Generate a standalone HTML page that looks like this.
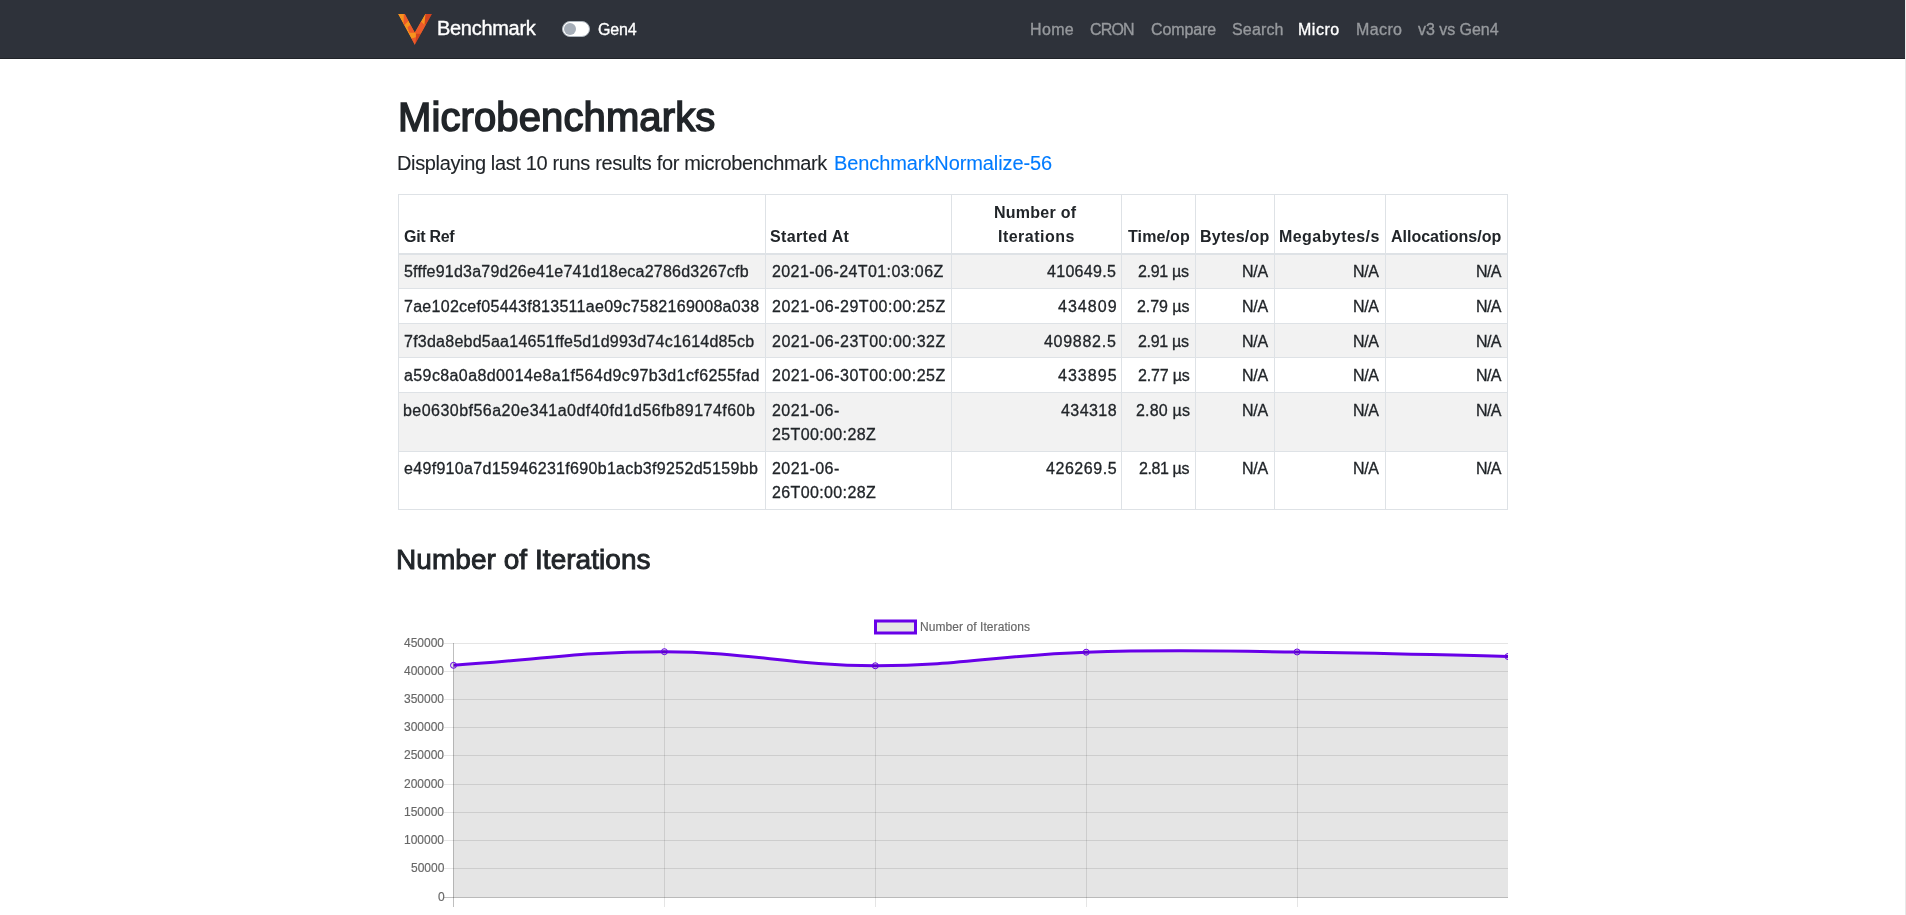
<!DOCTYPE html>
<html><head><meta charset="utf-8"><title>Microbenchmarks</title>
<style>
html,body{margin:0;padding:0;background:#fff;}
body{width:1906px;height:915px;overflow:hidden;position:relative;font-family:"Liberation Sans",sans-serif;}
.abs{position:absolute;}
.t{position:absolute;white-space:nowrap;will-change:transform;}
</style></head><body>
<div class="abs" style="left:0;top:0;width:1905px;height:58px;background:#2e323a"></div>
<div class="abs" style="left:0;top:58px;width:1905px;height:1px;background:#202328"></div>
<div class="abs" style="left:1905px;top:0;width:1px;height:915px;background:#e8e8e8"></div>
<svg class="abs" style="left:0;top:0" width="440" height="50"><defs><mask id="vm" maskUnits="userSpaceOnUse" x="0" y="0" width="440" height="50"><polygon points="397.91,14.10 404.99,14.10 414.75,32.28 425.09,14.10 431.97,14.10 414.75,44.91" fill="#fff"/></mask></defs><g mask="url(#vm)"><polygon points="397.91,14.10 404.99,14.10 414.75,32.28 425.09,14.10 431.97,14.10 414.75,44.91" fill="#f7931e"/><polygon points="403.85,13.53 405.18,13.53 408.63,20.80 403.96,25.39 403.46,24.63" fill="#ec5a2a"/><polygon points="410.62,24.63 415.14,32.28 413.99,32.86 409.39,32.86 407.48,27.31" fill="#ec5a2a"/><polygon points="411.31,38.41 416.67,36.88 417.43,38.79 414.75,45.68" fill="#ec5a2a"/><polygon points="425.47,13.53 432.74,13.53 426.23,24.63 424.51,24.63" fill="#d2431f"/><polygon points="420.88,21.57 424.51,24.63 426.23,24.63 421.26,33.43 415.90,33.43 414.75,32.28" fill="#ec5a2a"/><polygon points="415.90,33.43 421.26,33.43 415.14,45.68 415.90,38.79" fill="#d2431f"/></g></svg>
<div class="abs" style="left:562px;top:21px;width:26px;height:14px;border:1px solid #adb5bd;border-radius:8px;background:#fff"></div>
<div class="abs" style="left:564px;top:23px;width:12px;height:12px;border-radius:50%;background:#a6aeb8"></div>
<div class="abs" style="left:398px;top:255px;width:1110px;height:33px;background:#f2f2f2"></div>
<div class="abs" style="left:398px;top:324px;width:1110px;height:33px;background:#f2f2f2"></div>
<div class="abs" style="left:398px;top:393px;width:1110px;height:58px;background:#f2f2f2"></div>
<div class="abs" style="left:398px;top:194px;width:1110px;height:1px;background:#dee2e6"></div>
<div class="abs" style="left:398px;top:288px;width:1110px;height:1px;background:#dee2e6"></div>
<div class="abs" style="left:398px;top:323px;width:1110px;height:1px;background:#dee2e6"></div>
<div class="abs" style="left:398px;top:357px;width:1110px;height:1px;background:#dee2e6"></div>
<div class="abs" style="left:398px;top:392px;width:1110px;height:1px;background:#dee2e6"></div>
<div class="abs" style="left:398px;top:451px;width:1110px;height:1px;background:#dee2e6"></div>
<div class="abs" style="left:398px;top:509px;width:1110px;height:1px;background:#dee2e6"></div>
<div class="abs" style="left:398px;top:253px;width:1110px;height:2px;background:#dee2e6"></div>
<div class="abs" style="left:398px;top:194px;width:1px;height:316px;background:#dee2e6"></div>
<div class="abs" style="left:765px;top:194px;width:1px;height:316px;background:#dee2e6"></div>
<div class="abs" style="left:951px;top:194px;width:1px;height:316px;background:#dee2e6"></div>
<div class="abs" style="left:1121px;top:194px;width:1px;height:316px;background:#dee2e6"></div>
<div class="abs" style="left:1195px;top:194px;width:1px;height:316px;background:#dee2e6"></div>
<div class="abs" style="left:1274px;top:194px;width:1px;height:316px;background:#dee2e6"></div>
<div class="abs" style="left:1385px;top:194px;width:1px;height:316px;background:#dee2e6"></div>
<div class="abs" style="left:1507px;top:194px;width:1px;height:316px;background:#dee2e6"></div>
<svg class="abs" width="1906" height="915" style="left:0;top:0">
<defs><clipPath id="cc"><rect x="398" y="590" width="1110" height="330"/></clipPath></defs>
<g clip-path="url(#cc)">
<path d="M453.50,665.32 C537.86,659.86 580.05,651.59 664.40,651.68 C748.77,651.76 790.93,665.65 875.30,665.75 C959.65,665.86 1001.75,654.96 1086.20,652.19 C1170.47,649.44 1212.75,651.09 1297.10,651.96 C1381.47,652.82 1423.64,654.68 1508.00,656.50 L1508.00,897.20 L453.50,897.20 Z" fill="rgba(0,0,0,0.1)"/>
<line x1="444" y1="643.5" x2="1508" y2="643.5" stroke="rgba(0,0,0,0.1)" stroke-width="1"/>
<line x1="444" y1="671.5" x2="1508" y2="671.5" stroke="rgba(0,0,0,0.1)" stroke-width="1"/>
<line x1="444" y1="699.5" x2="1508" y2="699.5" stroke="rgba(0,0,0,0.1)" stroke-width="1"/>
<line x1="444" y1="727.5" x2="1508" y2="727.5" stroke="rgba(0,0,0,0.1)" stroke-width="1"/>
<line x1="444" y1="755.5" x2="1508" y2="755.5" stroke="rgba(0,0,0,0.1)" stroke-width="1"/>
<line x1="444" y1="784.5" x2="1508" y2="784.5" stroke="rgba(0,0,0,0.1)" stroke-width="1"/>
<line x1="444" y1="812.5" x2="1508" y2="812.5" stroke="rgba(0,0,0,0.1)" stroke-width="1"/>
<line x1="444" y1="840.5" x2="1508" y2="840.5" stroke="rgba(0,0,0,0.1)" stroke-width="1"/>
<line x1="444" y1="868.5" x2="1508" y2="868.5" stroke="rgba(0,0,0,0.1)" stroke-width="1"/>
<line x1="444" y1="897.5" x2="1508" y2="897.5" stroke="rgba(0,0,0,0.25)" stroke-width="1"/>
<line x1="453.5" y1="643" x2="453.5" y2="907" stroke="rgba(0,0,0,0.25)" stroke-width="1"/>
<line x1="664.5" y1="643" x2="664.5" y2="907" stroke="rgba(0,0,0,0.1)" stroke-width="1"/>
<line x1="875.5" y1="643" x2="875.5" y2="907" stroke="rgba(0,0,0,0.1)" stroke-width="1"/>
<line x1="1086.5" y1="643" x2="1086.5" y2="907" stroke="rgba(0,0,0,0.1)" stroke-width="1"/>
<line x1="1297.5" y1="643" x2="1297.5" y2="907" stroke="rgba(0,0,0,0.1)" stroke-width="1"/>
<line x1="1508.5" y1="643" x2="1508.5" y2="907" stroke="rgba(0,0,0,0.1)" stroke-width="1"/>
<path d="M453.50,665.32 C537.86,659.86 580.05,651.59 664.40,651.68 C748.77,651.76 790.93,665.65 875.30,665.75 C959.65,665.86 1001.75,654.96 1086.20,652.19 C1170.47,649.44 1212.75,651.09 1297.10,651.96 C1381.47,652.82 1423.64,654.68 1508.00,656.50" fill="none" stroke="#6800e8" stroke-width="3" stroke-linejoin="round"/>
<circle cx="453.50" cy="665.32" r="3" fill="rgba(0,0,0,0.1)" stroke="#6800e8" stroke-width="1"/>
<circle cx="664.40" cy="651.68" r="3" fill="rgba(0,0,0,0.1)" stroke="#6800e8" stroke-width="1"/>
<circle cx="875.30" cy="665.75" r="3" fill="rgba(0,0,0,0.1)" stroke="#6800e8" stroke-width="1"/>
<circle cx="1086.20" cy="652.19" r="3" fill="rgba(0,0,0,0.1)" stroke="#6800e8" stroke-width="1"/>
<circle cx="1297.10" cy="651.96" r="3" fill="rgba(0,0,0,0.1)" stroke="#6800e8" stroke-width="1"/>
<circle cx="1508.00" cy="656.50" r="3" fill="rgba(0,0,0,0.1)" stroke="#6800e8" stroke-width="1"/>
</g>
<rect x="875.5" y="621" width="40" height="12" fill="rgba(0,0,0,0.1)" stroke="#6800e8" stroke-width="3"/>
</svg>
<div class="t" style="left:436.70px;top:18.00px;font-size:20px;line-height:20px;font-weight:400;color:#fff;letter-spacing:-0.294px;-webkit-text-stroke:0.40px #fff">Benchmark</div>
<div class="t" style="left:598.46px;top:22.00px;font-size:16px;line-height:16px;font-weight:400;color:#fff;letter-spacing:-0.131px;-webkit-text-stroke:0.35px #fff">Gen4</div>
<div class="t" style="left:1029.67px;top:22.00px;font-size:16px;line-height:16px;font-weight:400;color:#96999d;letter-spacing:0.356px;-webkit-text-stroke:0.35px #96999d">Home</div>
<div class="t" style="left:1090.17px;top:22.00px;font-size:16px;line-height:16px;font-weight:400;color:#96999d;letter-spacing:-0.815px;-webkit-text-stroke:0.35px #96999d">CRON</div>
<div class="t" style="left:1151.17px;top:22.00px;font-size:16px;line-height:16px;font-weight:400;color:#96999d;letter-spacing:-0.093px;-webkit-text-stroke:0.35px #96999d">Compare</div>
<div class="t" style="left:1232.24px;top:22.00px;font-size:16px;line-height:16px;font-weight:400;color:#96999d;letter-spacing:0.155px;-webkit-text-stroke:0.35px #96999d">Search</div>
<div class="t" style="left:1298.44px;top:22.00px;font-size:16px;line-height:16px;font-weight:400;color:#fff;letter-spacing:0.535px;-webkit-text-stroke:0.35px #fff">Micro</div>
<div class="t" style="left:1355.67px;top:22.00px;font-size:16px;line-height:16px;font-weight:400;color:#96999d;letter-spacing:0.384px;-webkit-text-stroke:0.35px #96999d">Macro</div>
<div class="t" style="left:1417.69px;top:22.00px;font-size:16px;line-height:16px;font-weight:400;color:#96999d;letter-spacing:-0.042px;-webkit-text-stroke:0.35px #96999d">v3 vs Gen4</div>
<div class="t" style="left:397.71px;top:97.00px;font-size:40px;line-height:40px;font-weight:400;color:#212529;letter-spacing:0.114px;-webkit-text-stroke:1.50px #212529">Microbenchmarks</div>
<div class="t" style="left:397.33px;top:153.00px;font-size:20px;line-height:20px;font-weight:400;color:#212529;letter-spacing:-0.360px;-webkit-text-stroke:0.10px #212529">Displaying last 10 runs results for microbenchmark</div>
<div class="t" style="left:833.53px;top:153.00px;font-size:20px;line-height:20px;font-weight:400;color:#007bff;letter-spacing:-0.092px;-webkit-text-stroke:0.10px #007bff">BenchmarkNormalize-56</div>
<div class="t" style="left:404.00px;top:229.00px;font-size:16px;line-height:16px;font-weight:700;color:#212529;letter-spacing:-0.316px">Git Ref</div>
<div class="t" style="left:770.26px;top:229.00px;font-size:16px;line-height:16px;font-weight:700;color:#212529;letter-spacing:0.339px">Started At</div>
<div class="t" style="left:994.26px;top:205.00px;font-size:16px;line-height:16px;font-weight:700;color:#212529;letter-spacing:0.259px">Number of</div>
<div class="t" style="left:997.98px;top:229.00px;font-size:16px;line-height:16px;font-weight:700;color:#212529;letter-spacing:0.480px">Iterations</div>
<div class="t" style="left:1127.52px;top:229.00px;font-size:16px;line-height:16px;font-weight:700;color:#212529;letter-spacing:0.118px">Time/op</div>
<div class="t" style="left:1199.52px;top:229.00px;font-size:16px;line-height:16px;font-weight:700;color:#212529;letter-spacing:0.238px">Bytes/op</div>
<div class="t" style="left:1279.48px;top:229.00px;font-size:16px;line-height:16px;font-weight:700;color:#212529;letter-spacing:0.432px">Megabytes/s</div>
<div class="t" style="left:1391.00px;top:229.00px;font-size:16px;line-height:16px;font-weight:700;color:#212529;letter-spacing:0.001px">Allocations/op</div>
<div class="t" style="left:404.15px;top:264.00px;font-size:16px;line-height:16px;font-weight:400;color:#212529;letter-spacing:0.226px;-webkit-text-stroke:0.30px #212529">5fffe91d3a79d26e41e741d18eca2786d3267cfb</div>
<div class="t" style="left:771.63px;top:264.00px;font-size:16px;line-height:16px;font-weight:400;color:#212529;letter-spacing:0.396px;-webkit-text-stroke:0.30px #212529">2021-06-24T01:03:06Z</div>
<div class="t" style="left:1047.39px;top:264.00px;font-size:16px;line-height:16px;font-weight:400;color:#212529;letter-spacing:0.298px;-webkit-text-stroke:0.30px #212529">410649.5</div>
<div class="t" style="left:1138.41px;top:264.00px;font-size:16px;line-height:16px;font-weight:400;color:#212529;letter-spacing:-0.311px;-webkit-text-stroke:0.30px #212529">2.91 µs</div>
<div class="t" style="left:1242.41px;top:264.00px;font-size:16px;line-height:16px;font-weight:400;color:#212529;letter-spacing:-0.290px;-webkit-text-stroke:0.30px #212529">N/A</div>
<div class="t" style="left:1352.91px;top:264.00px;font-size:16px;line-height:16px;font-weight:400;color:#212529;letter-spacing:-0.410px;-webkit-text-stroke:0.30px #212529">N/A</div>
<div class="t" style="left:1475.63px;top:264.00px;font-size:16px;line-height:16px;font-weight:400;color:#212529;letter-spacing:-0.660px;-webkit-text-stroke:0.30px #212529">N/A</div>
<div class="t" style="left:404.15px;top:299.00px;font-size:16px;line-height:16px;font-weight:400;color:#212529;letter-spacing:0.282px;-webkit-text-stroke:0.30px #212529">7ae102cef05443f813511ae09c7582169008a038</div>
<div class="t" style="left:771.63px;top:299.00px;font-size:16px;line-height:16px;font-weight:400;color:#212529;letter-spacing:0.502px;-webkit-text-stroke:0.30px #212529">2021-06-29T00:00:25Z</div>
<div class="t" style="left:1057.63px;top:299.00px;font-size:16px;line-height:16px;font-weight:400;color:#212529;letter-spacing:1.038px;-webkit-text-stroke:0.30px #212529">434809</div>
<div class="t" style="left:1136.91px;top:299.00px;font-size:16px;line-height:16px;font-weight:400;color:#212529;letter-spacing:-0.061px;-webkit-text-stroke:0.30px #212529">2.79 µs</div>
<div class="t" style="left:1242.41px;top:299.00px;font-size:16px;line-height:16px;font-weight:400;color:#212529;letter-spacing:-0.290px;-webkit-text-stroke:0.30px #212529">N/A</div>
<div class="t" style="left:1352.91px;top:299.00px;font-size:16px;line-height:16px;font-weight:400;color:#212529;letter-spacing:-0.410px;-webkit-text-stroke:0.30px #212529">N/A</div>
<div class="t" style="left:1475.63px;top:299.00px;font-size:16px;line-height:16px;font-weight:400;color:#212529;letter-spacing:-0.660px;-webkit-text-stroke:0.30px #212529">N/A</div>
<div class="t" style="left:404.15px;top:334.00px;font-size:16px;line-height:16px;font-weight:400;color:#212529;letter-spacing:0.245px;-webkit-text-stroke:0.30px #212529">7f3da8ebd5aa14651ffe5d1d993d74c1614d85cb</div>
<div class="t" style="left:771.63px;top:334.00px;font-size:16px;line-height:16px;font-weight:400;color:#212529;letter-spacing:0.502px;-webkit-text-stroke:0.30px #212529">2021-06-23T00:00:32Z</div>
<div class="t" style="left:1044.41px;top:334.00px;font-size:16px;line-height:16px;font-weight:400;color:#212529;letter-spacing:0.723px;-webkit-text-stroke:0.30px #212529">409882.5</div>
<div class="t" style="left:1138.41px;top:334.00px;font-size:16px;line-height:16px;font-weight:400;color:#212529;letter-spacing:-0.311px;-webkit-text-stroke:0.30px #212529">2.91 µs</div>
<div class="t" style="left:1242.41px;top:334.00px;font-size:16px;line-height:16px;font-weight:400;color:#212529;letter-spacing:-0.290px;-webkit-text-stroke:0.30px #212529">N/A</div>
<div class="t" style="left:1352.91px;top:334.00px;font-size:16px;line-height:16px;font-weight:400;color:#212529;letter-spacing:-0.410px;-webkit-text-stroke:0.30px #212529">N/A</div>
<div class="t" style="left:1475.63px;top:334.00px;font-size:16px;line-height:16px;font-weight:400;color:#212529;letter-spacing:-0.660px;-webkit-text-stroke:0.30px #212529">N/A</div>
<div class="t" style="left:404.15px;top:368.00px;font-size:16px;line-height:16px;font-weight:400;color:#212529;letter-spacing:0.397px;-webkit-text-stroke:0.30px #212529">a59c8a0a8d0014e8a1f564d9c97b3d1cf6255fad</div>
<div class="t" style="left:771.63px;top:368.00px;font-size:16px;line-height:16px;font-weight:400;color:#212529;letter-spacing:0.502px;-webkit-text-stroke:0.30px #212529">2021-06-30T00:00:25Z</div>
<div class="t" style="left:1057.65px;top:368.00px;font-size:16px;line-height:16px;font-weight:400;color:#212529;letter-spacing:1.034px;-webkit-text-stroke:0.30px #212529">433895</div>
<div class="t" style="left:1137.65px;top:368.00px;font-size:16px;line-height:16px;font-weight:400;color:#212529;letter-spacing:-0.184px;-webkit-text-stroke:0.30px #212529">2.77 µs</div>
<div class="t" style="left:1242.41px;top:368.00px;font-size:16px;line-height:16px;font-weight:400;color:#212529;letter-spacing:-0.290px;-webkit-text-stroke:0.30px #212529">N/A</div>
<div class="t" style="left:1352.91px;top:368.00px;font-size:16px;line-height:16px;font-weight:400;color:#212529;letter-spacing:-0.410px;-webkit-text-stroke:0.30px #212529">N/A</div>
<div class="t" style="left:1475.63px;top:368.00px;font-size:16px;line-height:16px;font-weight:400;color:#212529;letter-spacing:-0.660px;-webkit-text-stroke:0.30px #212529">N/A</div>
<div class="t" style="left:403.15px;top:403.00px;font-size:16px;line-height:16px;font-weight:400;color:#212529;letter-spacing:0.465px;-webkit-text-stroke:0.30px #212529">be0630bf56a20e341a0df40fd1d56fb89174f60b</div>
<div class="t" style="left:771.63px;top:403.00px;font-size:16px;line-height:16px;font-weight:400;color:#212529;letter-spacing:0.463px;-webkit-text-stroke:0.30px #212529">2021-06-</div>
<div class="t" style="left:771.63px;top:427.00px;font-size:16px;line-height:16px;font-weight:400;color:#212529;letter-spacing:0.370px;-webkit-text-stroke:0.30px #212529">25T00:00:28Z</div>
<div class="t" style="left:1060.63px;top:403.00px;font-size:16px;line-height:16px;font-weight:400;color:#212529;letter-spacing:0.438px;-webkit-text-stroke:0.30px #212529">434318</div>
<div class="t" style="left:1136.15px;top:403.00px;font-size:16px;line-height:16px;font-weight:400;color:#212529;letter-spacing:0.183px;-webkit-text-stroke:0.30px #212529">2.80 µs</div>
<div class="t" style="left:1242.41px;top:403.00px;font-size:16px;line-height:16px;font-weight:400;color:#212529;letter-spacing:-0.290px;-webkit-text-stroke:0.30px #212529">N/A</div>
<div class="t" style="left:1352.91px;top:403.00px;font-size:16px;line-height:16px;font-weight:400;color:#212529;letter-spacing:-0.410px;-webkit-text-stroke:0.30px #212529">N/A</div>
<div class="t" style="left:1475.63px;top:403.00px;font-size:16px;line-height:16px;font-weight:400;color:#212529;letter-spacing:-0.660px;-webkit-text-stroke:0.30px #212529">N/A</div>
<div class="t" style="left:404.15px;top:461.00px;font-size:16px;line-height:16px;font-weight:400;color:#212529;letter-spacing:0.311px;-webkit-text-stroke:0.30px #212529">e49f910a7d15946231f690b1acb3f9252d5159bb</div>
<div class="t" style="left:771.63px;top:461.00px;font-size:16px;line-height:16px;font-weight:400;color:#212529;letter-spacing:0.463px;-webkit-text-stroke:0.30px #212529">2021-06-</div>
<div class="t" style="left:771.63px;top:485.00px;font-size:16px;line-height:16px;font-weight:400;color:#212529;letter-spacing:0.370px;-webkit-text-stroke:0.30px #212529">26T00:00:28Z</div>
<div class="t" style="left:1045.65px;top:461.00px;font-size:16px;line-height:16px;font-weight:400;color:#212529;letter-spacing:0.546px;-webkit-text-stroke:0.30px #212529">426269.5</div>
<div class="t" style="left:1138.91px;top:461.00px;font-size:16px;line-height:16px;font-weight:400;color:#212529;letter-spacing:-0.394px;-webkit-text-stroke:0.30px #212529">2.81 µs</div>
<div class="t" style="left:1242.41px;top:461.00px;font-size:16px;line-height:16px;font-weight:400;color:#212529;letter-spacing:-0.290px;-webkit-text-stroke:0.30px #212529">N/A</div>
<div class="t" style="left:1352.91px;top:461.00px;font-size:16px;line-height:16px;font-weight:400;color:#212529;letter-spacing:-0.410px;-webkit-text-stroke:0.30px #212529">N/A</div>
<div class="t" style="left:1475.63px;top:461.00px;font-size:16px;line-height:16px;font-weight:400;color:#212529;letter-spacing:-0.660px;-webkit-text-stroke:0.30px #212529">N/A</div>
<div class="t" style="left:396.25px;top:546.00px;font-size:28px;line-height:28px;font-weight:400;color:#212529;letter-spacing:0.048px;-webkit-text-stroke:0.90px #212529">Number of Iterations</div>
<div class="t" style="left:920.18px;top:621.00px;font-size:12px;line-height:12px;font-weight:400;color:#666;letter-spacing:0.069px;-webkit-text-stroke:0.15px #666">Number of Iterations</div>
<div class="t" style="left:404.28px;top:637.00px;font-size:12px;line-height:12px;font-weight:400;color:#666;letter-spacing:0.000px;-webkit-text-stroke:0.15px #666">450000</div>
<div class="t" style="left:404.28px;top:665.00px;font-size:12px;line-height:12px;font-weight:400;color:#666;letter-spacing:0.000px;-webkit-text-stroke:0.15px #666">400000</div>
<div class="t" style="left:404.28px;top:693.00px;font-size:12px;line-height:12px;font-weight:400;color:#666;letter-spacing:0.000px;-webkit-text-stroke:0.15px #666">350000</div>
<div class="t" style="left:404.28px;top:721.00px;font-size:12px;line-height:12px;font-weight:400;color:#666;letter-spacing:0.000px;-webkit-text-stroke:0.15px #666">300000</div>
<div class="t" style="left:404.28px;top:749.00px;font-size:12px;line-height:12px;font-weight:400;color:#666;letter-spacing:0.000px;-webkit-text-stroke:0.15px #666">250000</div>
<div class="t" style="left:404.28px;top:778.00px;font-size:12px;line-height:12px;font-weight:400;color:#666;letter-spacing:0.000px;-webkit-text-stroke:0.15px #666">200000</div>
<div class="t" style="left:404.28px;top:806.00px;font-size:12px;line-height:12px;font-weight:400;color:#666;letter-spacing:0.000px;-webkit-text-stroke:0.15px #666">150000</div>
<div class="t" style="left:404.28px;top:834.00px;font-size:12px;line-height:12px;font-weight:400;color:#666;letter-spacing:0.000px;-webkit-text-stroke:0.15px #666">100000</div>
<div class="t" style="left:410.95px;top:862.00px;font-size:12px;line-height:12px;font-weight:400;color:#666;letter-spacing:0.000px;-webkit-text-stroke:0.15px #666">50000</div>
<div class="t" style="left:437.65px;top:891.00px;font-size:12px;line-height:12px;font-weight:400;color:#666;letter-spacing:0.000px;-webkit-text-stroke:0.15px #666">0</div>
</body></html>
